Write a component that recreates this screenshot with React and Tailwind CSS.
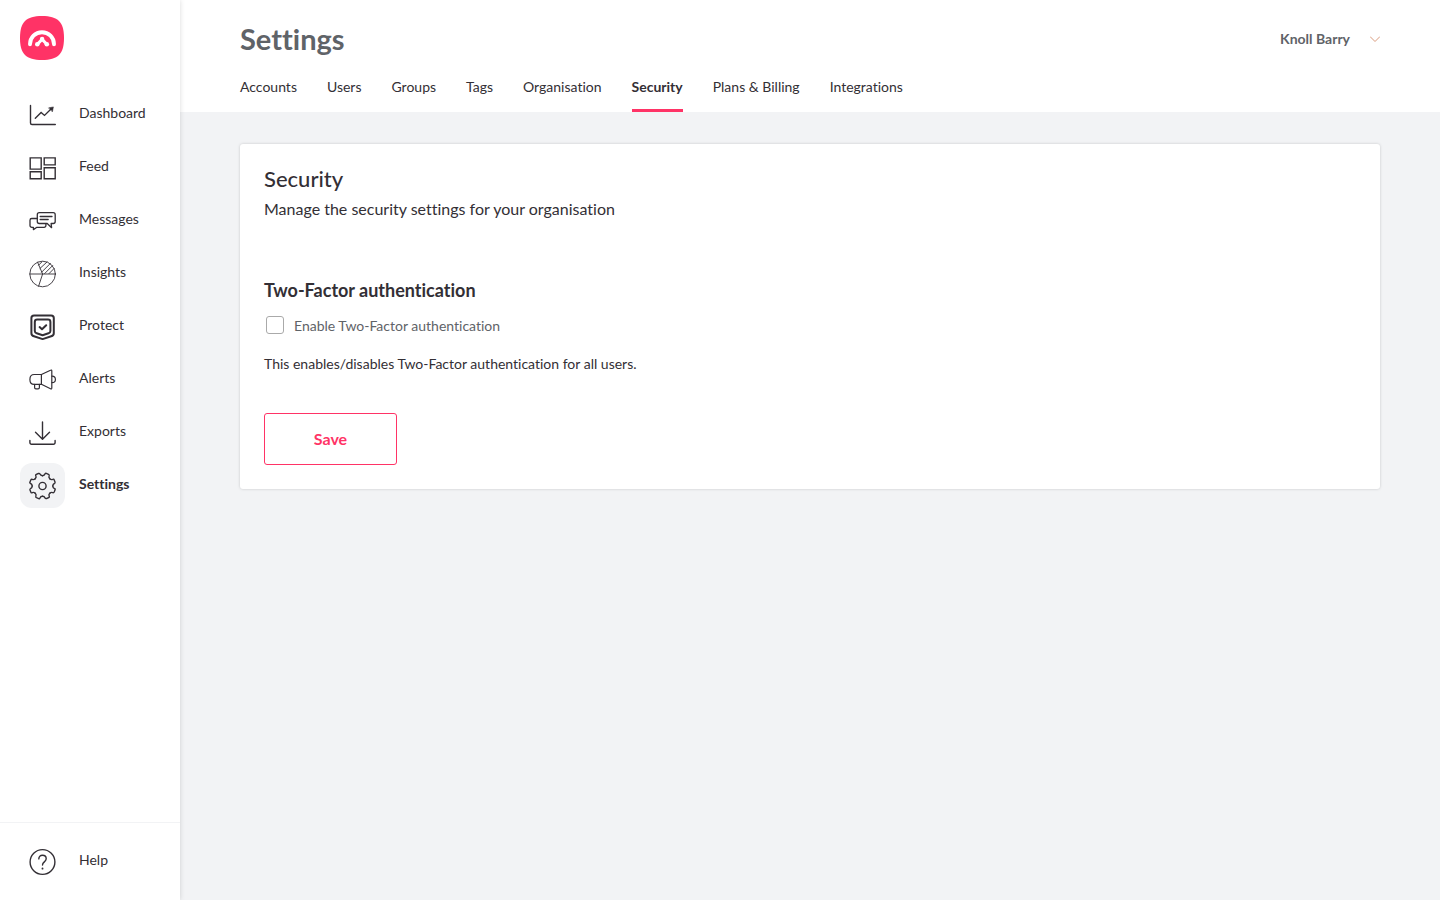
import { useState } from "react";

// every menu icon is drawn on the same 45x45 canvas
function MenuIcon({ children, width = 1.4 }) {
  return (
    <svg
      className="h-[45px] w-[45px] shrink-0"
      viewBox="0 0 45 45"
      fill="none"
      stroke="#332f35"
      strokeWidth={width}
      strokeLinecap="round"
      strokeLinejoin="round"
      aria-hidden="true"
    >
      {children}
    </svg>
  );
}

function DashboardIcon() {
  return (
    <MenuIcon>
      <path d="M10.5 13.5V31a1.5 1.5 0 0 0 1.5 1.5h23.3" />
      <path d="M15.3 26.2l5.8-5.8 3.4 3 7-7" strokeLinejoin="miter" />
      <path d="M28.8 15.8l4.6-.9-.9 4.7z" fill="#332f35" strokeWidth="0.5" />
    </MenuIcon>
  );
}

function FeedIcon() {
  return (
    <MenuIcon>
      <g strokeLinejoin="miter">
        <path d="M10.2 12.9h11v11.2h-11z" />
        <path d="M24.2 12.9h11v7h-11z" />
        <path d="M10.2 26.7h11v7h-11z" />
        <path d="M24.2 22.8h11v10.9h-11z" />
      </g>
    </MenuIcon>
  );
}

function MessagesIcon() {
  return (
    <MenuIcon width={1.3}>
      <path d="M19.3 14.7h13.9a2 2 0 0 1 2 2v6.8a2 2 0 0 1-2 2h-2.1l.5 4.2-4.4-4.2h-7.9a2 2 0 0 1-2-2v-6.8a2 2 0 0 1 2-2z" />
      <path d="M17.2 20.5h-5.4a1.8 1.8 0 0 0-1.8 1.8v5.2a1.8 1.8 0 0 0 1.8 1.8h1.6v2.3l3.5-2.3h7.2a1.8 1.8 0 0 0 1.8-1.8v-1.6" />
      <path d="M20.2 18.5h11.8M20.2 21.5h8" />
    </MenuIcon>
  );
}

function InsightsIcon() {
  return (
    <MenuIcon width={0.9}>
      <circle cx="22.6" cy="23" r="12.8" />
      <path d="M9.8 23h25.6M22.6 23l-5-11.7M22.6 23l-4 12.2" />
      <path d="M20 17.4l7-6.4M21.6 21.2l8.8-8.8M24.6 22.6l8-8M29 22.6l5.2-5.2M18.6 14.2l3.2-3.2" />
    </MenuIcon>
  );
}

function ProtectIcon() {
  return (
    <MenuIcon width={2}>
      <path d="M14 11.4h17.2a2.6 2.6 0 0 1 2.6 2.6v15.2c0 1.6-1 2.6-2.6 3.1l-8.6 2.8-8.6-2.8c-1.6-.5-2.6-1.5-2.6-3.1V14a2.6 2.6 0 0 1 2.6-2.6z" />
      <path d="M17.2 15.6H28a2.4 2.4 0 0 1 2.4 2.4v8.9c0 1.2-.7 2-1.9 2.4l-5.9 1.9-5.9-1.9c-1.2-.4-1.9-1.2-1.9-2.4V18a2.4 2.4 0 0 1 2.4-2.4z" />
      <path d="M19.6 23.1l2.4 2.2 4.2-4.1" />
    </MenuIcon>
  );
}

function AlertsIcon() {
  return (
    <MenuIcon width={1.2}>
      <path d="M21.4 17.5h-7.2c-2.6 0-4.3 2-4.3 4.9s1.7 4.9 4.3 4.9h7.2z" />
      <path d="M21.4 17.5l9.1-4.3c.8-.4 1.3-.1 1.3.8v17c0 .9-.5 1.2-1.3.8l-9.1-4.5" />
      <path d="M32 19.2c2.2 0 3.4 1.2 3.4 3.2s-1.2 3.2-3.4 3.2" />
      <path d="M14.6 27.3v3.2c0 .9.5 1.3 1.3 1.3h2.2c.8 0 1.3-.4 1.3-1.3v-3.2" />
    </MenuIcon>
  );
}

function ExportsIcon() {
  return (
    <MenuIcon>
      <path d="M22.5 12v17M15.5 22.3l7 7 7-7" />
      <path d="M9.9 30.4v2.2a1.6 1.6 0 0 0 1.6 1.6h22a1.6 1.6 0 0 0 1.6-1.6v-2.2" />
    </MenuIcon>
  );
}

function SettingsIcon() {
  // one tooth, repeated round the hub
  const turns = [0, 45, 90, 135, 180, 225, 270, 315];
  return (
    <MenuIcon>
      <circle cx="22.5" cy="23" r="3.6" />
      {turns.map((turn) => (
        <path
          key={turn}
          transform={`rotate(${turn} 22.5 23)`}
          d="M22.5 12.7C24 12.7 24.6 12.2 25 11.1Q25.3 10 26.3 10.4L28.5 11.3Q29.5 11.8 29.14 12.81C28.65 13.88 28.72 14.66 29.78 15.72"
        />
      ))}
    </MenuIcon>
  );
}

function HelpIcon() {
  return (
    <MenuIcon>
      <circle cx="22.5" cy="23" r="12.4" />
      <path d="M18.8 19.9c0-2.3 1.5-3.7 3.7-3.7s3.7 1.4 3.7 3.5c0 3.1-3.7 3.2-3.7 6.3" />
      <path d="M22.5 29.3v.4" strokeWidth="1.8" />
    </MenuIcon>
  );
}

function Logo() {
  return (
    <svg className="h-11 w-11" viewBox="0 0 44 44" fill="none" aria-hidden="true">
      <path
        d="M22 0c16 0 22 6 22 22s-6 22-22 22S0 38 0 22 6 0 22 0z"
        fill="#ff3366"
      />
      <g stroke="#fff" strokeLinecap="round" strokeLinejoin="round">
        <path d="M10 28.2a12 12 0 0 1 24 0" strokeWidth="3.9" />
        <path d="M17.6 28l4.5-4.6 4.5 4.6" strokeWidth="3" />
      </g>
      <g fill="#fff">
        <circle cx="17.3" cy="28.2" r="2.3" />
        <circle cx="22.1" cy="23" r="2.2" />
        <circle cx="26.8" cy="28.2" r="2.3" />
      </g>
    </svg>
  );
}

const menuItems = [
  { label: "Dashboard", Icon: DashboardIcon },
  { label: "Feed", Icon: FeedIcon },
  { label: "Messages", Icon: MessagesIcon },
  { label: "Insights", Icon: InsightsIcon },
  { label: "Protect", Icon: ProtectIcon },
  { label: "Alerts", Icon: AlertsIcon },
  { label: "Exports", Icon: ExportsIcon },
  { label: "Settings", Icon: SettingsIcon, active: true },
];

const tabs = [
  "Accounts",
  "Users",
  "Groups",
  "Tags",
  "Organisation",
  "Security",
  "Plans & Billing",
  "Integrations",
];

function MenuLink({ label, Icon, active }) {
  return (
    <a href="#" className="flex h-[53px] items-center gap-3.5 pl-5">
      <span className={active ? "rounded-xl bg-[#f2f3f5]" : ""}>
        <Icon />
      </span>
      <span className={active ? "pb-1 font-bold" : "pb-1"}>{label}</span>
    </a>
  );
}

function Sidebar() {
  return (
    <aside className="z-10 flex w-[180px] shrink-0 flex-col bg-white text-sm shadow-[0_0_5px_rgba(0,0,0,0.15)]">
      <a href="#" aria-label="Home" className="ml-5 mt-4 block w-11">
        <Logo />
      </a>
      <nav className="mt-7">
        {menuItems.map((item) => (
          <MenuLink key={item.label} {...item} />
        ))}
      </nav>
      <div className="mt-auto border-t border-[#f2f3f5] pb-3 pt-3">
        <MenuLink label="Help" Icon={HelpIcon} />
      </div>
    </aside>
  );
}

function Header() {
  return (
    <header className="bg-white px-[60px]">
      <div className="flex h-[78px] items-center justify-between">
        <h1 className="text-[29px] font-bold leading-9 text-[#5f6368]">
          Settings
        </h1>
        <button
          type="button"
          className="flex items-center gap-5 text-sm font-bold text-[#5f6368]"
        >
          Knoll Barry
          <svg width="10" height="6" viewBox="0 0 10 6" fill="none" aria-hidden="true">
            <path d="M0 .5l5 5 5-5" stroke="#d99a7c" />
          </svg>
        </button>
      </div>
      <nav className="flex h-[34px] gap-[30px] text-sm">
        {tabs.map((tab) => (
          <a
            key={tab}
            href="#"
            className={
              tab === "Security"
                ? "border-b-3 border-[#ff3366] font-bold leading-[18px]"
                : "leading-[18px]"
            }
          >
            {tab}
          </a>
        ))}
      </nav>
    </header>
  );
}

export default function App() {
  const [enabled, setEnabled] = useState(false);

  return (
    <div className="flex min-h-screen bg-[#f2f3f5] font-['Lato',sans-serif] text-[#332f35] [font-variant-ligatures:none]">
      <Sidebar />
      <div className="flex-1">
        <Header />
        <main className="px-[60px] py-8">
          <section className="rounded-[3px] bg-white p-6 shadow-[0_0_3px_rgba(0,0,0,0.18)]">
            <h2 className="text-[22px] font-medium leading-[22px]">Security</h2>
            <p className="mt-[7px] text-base">
              Manage the security settings for your organisation
            </p>
            <h3 className="mt-[57px] text-lg font-bold leading-6">
              Two-Factor authentication
            </h3>
            <label className="mt-[13px] flex items-end gap-2.5 pl-0.5 text-sm leading-[22px] text-[#5f6368]">
              <input
                type="checkbox"
                checked={enabled}
                onChange={(event) => setEnabled(event.target.checked)}
                className="mb-[3px] h-[18px] w-[18px] appearance-none rounded-[3px] border border-[#aaa] bg-white checked:bg-[#ff3366]"
              />
              Enable Two-Factor authentication
            </label>
            <p className="mt-[17px] text-sm">
              This enables/disables Two-Factor authentication for all users.
            </p>
            <button
              type="button"
              className="mt-[39px] h-[52px] w-[133px] rounded-[3px] border border-[#ff3366] text-base font-bold text-[#ff3366]"
            >
              Save
            </button>
          </section>
        </main>
      </div>
    </div>
  );
}
